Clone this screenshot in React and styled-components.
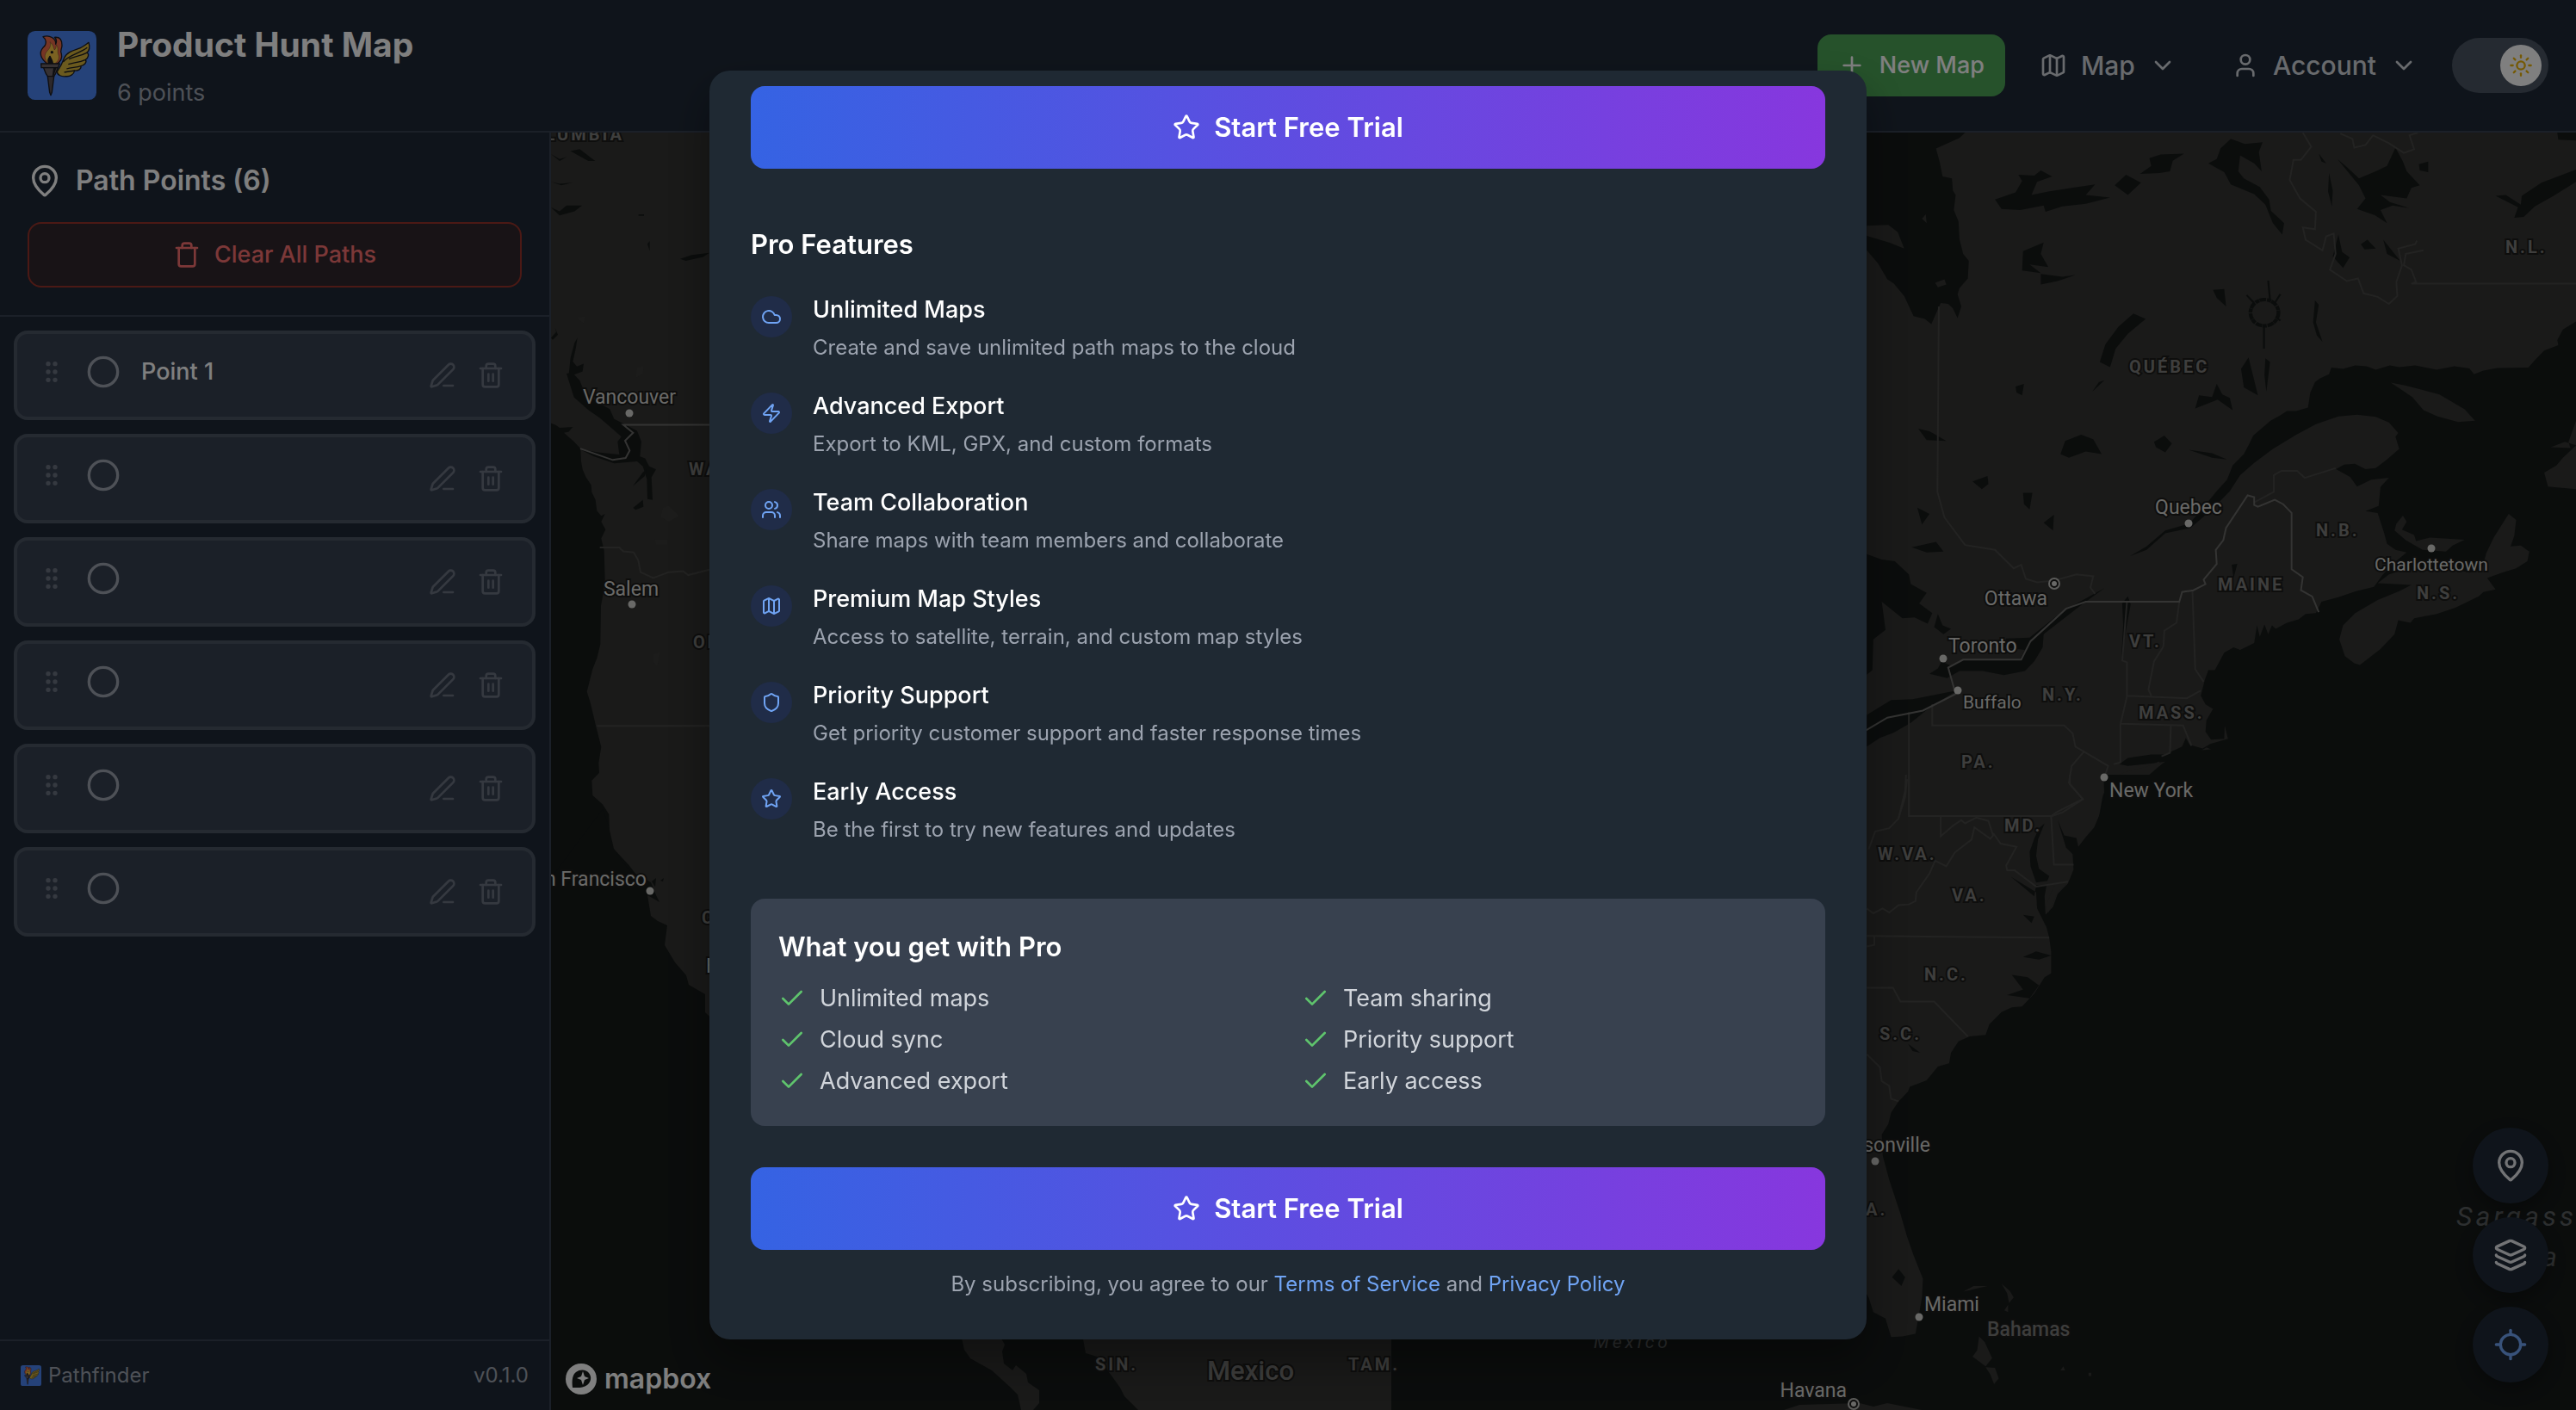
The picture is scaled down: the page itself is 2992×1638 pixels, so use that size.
import React from 'react';
import styled, { createGlobalStyle, css } from 'styled-components';
import {
	Check,
	ChevronDown,
	Circle,
	Cloud,
	GripVertical,
	Layers,
	Locate,
	Map,
	MapPin,
	PenLine,
	Plus,
	Shield,
	Star,
	Sun,
	Trash,
	Trash2,
	User,
	Users,
	Zap
} from 'lucide-react';

const colors = {
	panel: '#1f2937',
	modal: '#1f2933',
	raised: '#374151',
	line: '#374151',
	lineStrong: '#4b5563',
	text: '#ffffff',
	textSoft: '#d1d5db',
	textMuted: '#9ca3af',
	textFaint: '#6b7280',
	link: '#70a4f4',
	green: '#4ca556',
	check: '#5fc46d',
	red: '#f87171',
	land: '#343432',
	water: '#161a19',
	park: '#393937',
	border: '#464644',
	country: '#686866',
	halo: '#1c1c1b'
};

const size = {
	small: '24px',
	body: '27px',
	nav: '30px',
	heading: '31px',
	section: '32px',
	title: '39px'
};

const GlobalStyle = createGlobalStyle`
	* {
		box-sizing: border-box;
	}
	html, body, #root {
		height: 100%;
	}
	body {
		margin: 0;
		overflow: hidden;
		background: ${colors.water};
		color: ${colors.text};
		font-family: Inter, "Liberation Sans", sans-serif;
		font-size: ${size.body};
		line-height: 40px;
	}
	h1, h2, h3, h4, p, ul {
		margin: 0;
		padding: 0;
	}
	ul {
		list-style: none;
	}
	button {
		margin: 0;
		padding: 0;
		border: 0;
		background: none;
		color: inherit;
		font: inherit;
		cursor: pointer;
	}
	svg {
		display: block;
		flex-shrink: 0;
	}
`;

const Page = styled.div`
	display: flex;
	flex-direction: column;
	height: 100vh;
`;

const Header = styled.header`
	display: flex;
	align-items: center;
	justify-content: space-between;
	padding: 24px 32px;
	background: ${colors.panel};
	border-bottom: 2px solid ${colors.line};
`;

const Brand = styled.div`
	display: flex;
	align-items: center;
	gap: 24px;
`;

const BrandText = styled.div`
	display: flex;
	flex-direction: column;
	gap: 8px;
`;

const MapTitle = styled.h1`
	font-size: ${size.title};
	line-height: 56px;
	font-weight: 700;
`;

const PointCount = styled.p`
	color: ${colors.textMuted};
`;

const Nav = styled.nav`
	display: flex;
	align-items: center;
	gap: 16px;
`;

const NewMapButton = styled.button`
	display: flex;
	align-items: center;
	gap: 16px;
	height: 72px;
	padding: 0 24px;
	border-radius: 16px;
	background: ${colors.green};
	font-weight: 500;
`;

const NavButton = styled.button`
	display: flex;
	align-items: center;
	gap: 16px;
	height: 80px;
	padding: 0 24px;
	color: ${colors.textSoft};
	font-size: ${size.nav};
	font-weight: 500;
`;

const ThemeSwitch = styled.label`
	display: flex;
	align-items: center;
	justify-content: flex-end;
	width: 112px;
	height: 64px;
	padding: 8px;
	border-radius: 32px;
	background: ${colors.lineStrong};
`;

const SwitchInput = styled.input`
	width: 0;
	height: 0;
	margin: 0;
	appearance: none;
`;

const SwitchKnob = styled.span`
	display: flex;
	align-items: center;
	justify-content: center;
	width: 48px;
	height: 48px;
	border-radius: 50%;
	background: #ffffff;
	color: #eab308;
`;

const Body = styled.div`
	display: flex;
	flex: 1;
	min-height: 0;
`;

const Sidebar = styled.aside`
	display: flex;
	flex-direction: column;
	flex: 0 0 640px;
	background: ${colors.panel};
	border-right: 2px solid ${colors.line};
`;

const SidebarTop = styled.div`
	display: flex;
	flex-direction: column;
	gap: 24px;
	padding: 32px;
	border-bottom: 2px solid ${colors.line};
`;

const SidebarTitle = styled.h2`
	display: flex;
	align-items: center;
	gap: 16px;
	font-size: ${size.section};
	line-height: 48px;
	font-weight: 600;
`;

const ClearButton = styled.button`
	display: flex;
	align-items: center;
	justify-content: center;
	gap: 16px;
	height: 76px;
	border: 2px solid #96332a;
	border-radius: 16px;
	background: #30272d;
	color: ${colors.red};
	font-weight: 500;
`;

const PointList = styled.ul`
	display: flex;
	flex: 1;
	flex-direction: column;
	gap: 16px;
	padding: 16px;
`;

const PointRow = styled.li`
	display: flex;
	align-items: flex-start;
	gap: 24px;
	padding: 24px;
	border: 4px solid ${colors.lineStrong};
	border-radius: 16px;
	background: ${colors.raised};
`;

const Grip = styled.span`
	display: flex;
	align-items: center;
	height: 40px;
	color: ${colors.textFaint};
`;

const PointMarker = styled.button`
	color: ${colors.textMuted};
`;

const PointName = styled.span`
	flex: 1;
	font-weight: 500;
`;

const PointActions = styled.span`
	display: flex;
	gap: 8px;
`;

const IconButton = styled.button`
	padding: 8px;
	color: ${colors.textFaint};
`;

const SidebarFooter = styled.footer`
	display: flex;
	align-items: center;
	justify-content: space-between;
	padding: 24px;
	border-top: 2px solid ${colors.line};
	color: ${colors.textMuted};
	font-size: ${size.small};
	line-height: 32px;
`;

const AppName = styled.span`
	display: flex;
	align-items: center;
	gap: 8px;
`;

const MapArea = styled.main`
	position: relative;
	flex: 1;
	min-width: 0;
	overflow: hidden;
	background: ${colors.water};
`;

const MapDrawing = styled.svg`
	width: 100%;
	height: 100%;

	.edge path {
		fill: none;
		stroke: ${colors.border};
		stroke-width: 2;
		vector-effect: non-scaling-stroke;
	}
	.country path {
		fill: none;
		stroke: ${colors.country};
		stroke-width: 2;
		vector-effect: non-scaling-stroke;
	}
`;

const MapLabel = styled.text`
	font-family: Roboto, "Liberation Sans", sans-serif;
	font-size: ${props => props.$small ? '21px' : '23px'};
	fill: #d2d2cf;
	stroke: ${colors.halo};
	stroke-width: 4px;
	paint-order: stroke;
	${props => props.$kind === 'region' && css`
		font-size: 20px;
		font-weight: 700;
		letter-spacing: 3px;
		fill: #7c7c7a;
	`}
	${props => props.$kind === 'country' && css`
		font-size: ${props.$large ? '31px' : '23px'};
		font-weight: 500;
		fill: #7a7a78;
	`}
	${props => props.$kind === 'water' && css`
		font-size: ${props.$large ? '32px' : '21px'};
		font-style: italic;
		letter-spacing: 4px;
		fill: #5a5e60;
		stroke: none;
	`}
`;

const MapboxMark = styled.a`
	position: absolute;
	left: 16px;
	bottom: 16px;
	display: flex;
	align-items: center;
	gap: 8px;
	color: #ffffff;
	font-size: ${size.section};
	font-weight: 600;
	text-decoration: none;
`;

const FloatingControls = styled.div`
	position: absolute;
	right: 32px;
	bottom: 32px;
	display: flex;
	flex-direction: column;
	gap: 16px;
`;

const FloatingButton = styled.button`
	display: flex;
	align-items: center;
	justify-content: center;
	width: 88px;
	height: 88px;
	border-radius: 50%;
	background: ${colors.panel};
	color: ${props => props.$active ? colors.link : '#e5e7eb'};
	box-shadow: 0 8px 20px rgba(0, 0, 0, 0.3);
`;

const Backdrop = styled.div`
	position: fixed;
	inset: 0;
	display: flex;
	align-items: center;
	justify-content: center;
	background: rgba(0, 0, 0, 0.5);
`;

const Dialog = styled.section`
	display: flex;
	flex-direction: column;
	justify-content: flex-end;
	width: 100%;
	max-width: 1344px;
	height: 90vh;
	padding: 0 48px 48px;
	overflow: hidden;
	border-radius: 24px;
	background: ${colors.modal};
	box-shadow: 0 24px 50px rgba(0, 0, 0, 0.35);
`;

const TrialButton = styled.button`
	display: flex;
	flex-shrink: 0;
	align-items: center;
	justify-content: center;
	gap: 16px;
	height: 96px;
	border-radius: 16px;
	background: linear-gradient(to right, #3563e3, #8737de);
	font-size: ${size.heading};
	line-height: 48px;
	font-weight: 600;
`;

const Features = styled.div`
	display: flex;
	flex-direction: column;
	gap: 32px;
	padding: 64px 0;
`;

const DialogHeading = styled.h3`
	font-size: ${size.heading};
	line-height: 48px;
	font-weight: 600;
`;

const FeatureList = styled.ul`
	display: flex;
	flex-direction: column;
	gap: 32px;
`;

const Feature = styled.li`
	display: flex;
	align-items: flex-start;
	gap: 24px;
`;

const FeatureIcon = styled.span`
	display: flex;
	align-items: center;
	justify-content: center;
	width: 48px;
	height: 48px;
	margin-top: 4px;
	border-radius: 50%;
	background: #202c48;
	color: ${colors.link};
`;

const FeatureText = styled.div`
	display: flex;
	flex-direction: column;
	gap: 8px;
`;

const FeatureTitle = styled.h4`
	font-size: ${size.body};
	font-weight: 500;
`;

const FeatureNote = styled.p`
	color: ${colors.textMuted};
	font-size: ${size.small};
	line-height: 32px;
`;

const Summary = styled.div`
	display: flex;
	flex-direction: column;
	gap: 16px;
	margin-bottom: 48px;
	padding: 32px;
	border-radius: 16px;
	background: #38414f;
`;

const Perks = styled.ul`
	display: grid;
	grid-template-columns: 1fr 1fr;
	gap: 8px 32px;
`;

const Perk = styled.li`
	display: flex;
	align-items: center;
	gap: 16px;
	color: ${colors.textSoft};

	svg {
		color: ${colors.check};
	}
`;

const Legal = styled.p`
	margin-top: 24px;
	color: ${colors.textMuted};
	font-size: ${size.small};
	line-height: 32px;
	text-align: center;
`;

const LegalLink = styled.a`
	color: ${colors.link};
	text-decoration: none;
`;

const points = ['Point 1', '', '', '', '', ''];

const features = [
	{ icon: Cloud, title: 'Unlimited Maps', note: 'Create and save unlimited path maps to the cloud' },
	{ icon: Zap, title: 'Advanced Export', note: 'Export to KML, GPX, and custom formats' },
	{ icon: Users, title: 'Team Collaboration', note: 'Share maps with team members and collaborate' },
	{ icon: Map, title: 'Premium Map Styles', note: 'Access to satellite, terrain, and custom map styles' },
	{ icon: Shield, title: 'Priority Support', note: 'Get priority customer support and faster response times' },
	{ icon: Star, title: 'Early Access', note: 'Be the first to try new features and updates' }
];

const perks = [
	'Unlimited maps',
	'Team sharing',
	'Cloud sync',
	'Priority support',
	'Advanced export',
	'Early access'
];

const cities = [
	{ name: 'Vancouver', x: 731, y: 469, anchor: 'middle', dot: [731, 480] },
	{ name: 'Salem', x: 733, y: 692, anchor: 'middle', dot: [734, 702] },
	{ name: 'San Francisco', x: 751, y: 1029, anchor: 'end', dot: [755, 1035] },
	{ name: 'Bakersfield', x: 820, y: 1130, anchor: 'start' },
	{ name: 'Quebec', x: 2542, y: 597, anchor: 'middle', dot: [2542, 608] },
	{ name: 'Charlottetown', x: 2824, y: 663, anchor: 'middle', dot: [2824, 637], small: true },
	{ name: 'Ottawa', x: 2378, y: 703, anchor: 'end', dot: [2386, 678], capital: true },
	{ name: 'Toronto', x: 2263, y: 758, anchor: 'start', dot: [2257, 765] },
	{ name: 'Buffalo', x: 2280, y: 823, anchor: 'start', dot: [2274, 802], small: true },
	{ name: 'New York', x: 2450, y: 926, anchor: 'start', dot: [2444, 903] },
	{ name: 'Jacksonville', x: 2242, y: 1338, anchor: 'end', dot: [2178, 1349] },
	{ name: 'Miami', x: 2235, y: 1523, anchor: 'start', dot: [2229, 1530] },
	{ name: 'Havana', x: 2145, y: 1623, anchor: 'end', dot: [2153, 1631], capital: true }
];

const regions = [
	['WASH.', 800, 552],
	['ORE.', 805, 753],
	['CALIF.', 815, 1073],
	['N.L.', 2910, 294],
	['QUÉBEC', 2473, 433],
	['N.B.', 2690, 623],
	['MAINE', 2576, 686],
	['N.S.', 2807, 696],
	['VT.', 2473, 752],
	['N.Y.', 2372, 814],
	['MASS.', 2484, 835],
	['PA.', 2278, 892],
	['MD.', 2328, 966],
	['W.VA.', 2181, 999],
	['VA.', 2267, 1047],
	['N.C.', 2235, 1139],
	['S.C.', 2183, 1208],
	['FLA.', 2139, 1412],
	['SIN.', 1272, 1592],
	['TAM.', 1566, 1592]
];

const Torch = ({ px }) => (
	<svg width={px} height={px} viewBox="24 24 240 240" aria-hidden="true">
		<rect x="24" y="24" width="240" height="240" rx="26" fill="#4b84f2"/>
		<g stroke="#1c1c22" strokeWidth="4" strokeLinejoin="round">
			<path d="M127 166C138 150 144 140 152 118C160 98 182 92 200 86C216 81 226 72 237 64C242 80 240 92 230 100C240 102 236 118 226 124C232 132 222 144 210 146C212 156 200 164 188 162C186 174 172 184 158 182C142 184 128 178 127 166Z" fill="#d6b53c"/>
			<path d="M230 100C208 112 186 112 168 122M226 124C204 134 186 134 166 140M210 146C192 152 176 150 160 156M188 162C174 166 164 164 152 168" fill="none"/>
			<path d="M148 132C166 108 206 102 232 82" fill="none"/>
			<path d="M92 138C70 120 62 100 78 82C94 68 88 52 78 44C100 36 124 50 122 70C126 62 124 52 118 46C138 44 144 56 144 74C144 86 136 92 142 104C146 120 138 132 124 140Z" fill="#ec6a48"/>
			<path d="M98 138C82 124 80 106 94 92C104 82 106 72 102 62C116 74 114 84 118 90C124 84 124 76 124 72C134 84 126 96 132 108C136 122 128 132 118 138Z" fill="#f6c544" strokeWidth="1"/>
			<path d="M100 138C90 126 98 118 102 112C106 122 112 126 112 138Z" fill="#1c1c22"/>
			<circle cx="109" cy="98" r="3" fill="#1c1c22"/>
			<path d="M71 138H136L130 152C126 160 124 172 116 182H94C86 172 84 162 80 152H72Z" fill="#6c6266"/>
			<path d="M80 152H130" fill="none"/>
			<path d="M94 182H116L109 238L105 248L101 238Z" fill="#5a5055"/>
			<path d="M116 154L122 154L112 182Z" fill="#2a282e"/>
		</g>
	</svg>
);

const MapboxIcon = () => (
	<svg width="38" height="38" viewBox="0 0 38 38" aria-hidden="true">
		<circle cx="19" cy="19" r="18" fill="currentColor"/>
		<path d="M9 29C8 20 9 14 13 11C18 7 25 8 28 12C32 17 30 23 26 26C21 30 14 29 9 29Z" fill={colors.water}/>
		<path d="M21 10L23 16L28 18L23 20L21 26L19 20L14 18L19 16Z" fill="currentColor"/>
	</svg>
);

const WestCoast = () => (
	<g>
		<g transform="translate(630 140) scale(0.3333 0.574)" fill={colors.water}>
			<path d="M0 606L45 616L60 622L106 620L92 630L75 632L110 650L133 664L135 690L140 706L152 722L170 738L172 752L185 768L190 790L205 800L218 796L205 812L220 828L205 846L215 870L218 930L210 964L204 982L202 1060L190 1088L175 1110L155 1156L168 1180L185 1222L205 1268L196 1300L198 1320L172 1336L175 1366L210 1384L232 1404L234 1440L242 1470L300 1506L372 1560L0 1568Z"/>
			<path d="M84 512L104 510L130 526L145 548L190 570L235 584L250 604L290 616L330 628L345 650L340 680L358 684L372 700L396 706L380 722L384 768L366 766L364 726L350 700L330 690L250 694L180 680L133 666L200 672L268 676L262 650L275 640L240 622L200 602L160 586L110 560Z"/>
			<path d="M92 514L98 480L112 450L122 440L116 462L106 488L120 498L144 492L140 508L112 514Z"/>
			<path d="M30 68L60 78L84 74L60 82ZM98 62L130 58L184 82L160 82ZM30 124L60 128L104 126L66 131ZM30 176L60 184L84 172L138 172L112 184L60 192ZM480 280L520 272L582 268L560 276L500 284ZM366 250L374 244V264ZM335 190H354V193H335ZM315 740L350 712L364 706L356 720ZM316 784L350 768L352 782L325 788ZM30 440L48 428L44 420L54 434L36 444Z"/>
		</g>
		<g transform="translate(630 140) scale(0.3333 0.574)" fill={colors.park}>
			<path d="M420 784L440 780L476 800L440 812L412 802ZM392 848L436 848V858L396 858ZM120 400L150 396L144 410ZM386 1080L410 1076L400 1104L386 1096ZM330 500L352 498L350 512L326 520Z"/>
		</g>
		<path d="M640 1020L700 940L707 960L713 986L722 1000L732 1012L756 1025L762 1040L766 1048L752 1040L756 1064L764 1070L775 1075L772 1098L784 1118L797 1133L800 1144L819 1155V1176L840 1196V1638H640Z" fill={colors.water}/>
		<path d="M757 1024L762 1020L761 1030ZM767 1023L771 1020L770 1024Z" fill={colors.water}/>
		<g className="edge" transform="translate(630 140) scale(0.3333 0.574)">
			<path d="M200 864L268 864L282 872L318 874L334 890L342 914L386 926L440 914L490 912L508 920L582 909M190 1225H582"/>
		</g>
		<g className="country" transform="translate(630 140) scale(0.3333 0.574)">
			<path d="M132 664L245 687L290 683L304 668L288 648L316 632L282 616H582"/>
		</g>
	</g>
);

const EastNorth = () => (
	<g transform="translate(2140 150) scale(0.5434 0.5102)">
		<g fill={colors.water}>
			<path d="M0 0H270L250 20L200 44L208 76L214 108L234 112L236 140L242 150L238 184L248 210L250 250L258 284L270 300L268 340L250 362L246 376L254 404L246 430L236 408L226 398L210 396L204 410L190 444L176 432L152 426L132 380L110 352L96 342L76 306L52 276L0 250Z"/>
			<path d="M1568 438L1540 456L1528 480L1530 492L1500 504L1482 524L1466 543L1400 544L1370 550L1350 558L1340 545L1308 540L1270 548L1224 538L1190 542L1170 538L1140 548L1120 540L1096 538L1070 546L1045 543L1040 558L1020 568L1010 576L1000 600L995 634L970 642L950 642L935 652L915 664L878 698L868 720L858 740L834 766L822 798L800 824L780 850L742 898L690 914L650 950L615 972L650 958L690 920L744 908L790 866L828 824L850 788L880 760L920 728L970 696L1012 672L1060 654L1100 650L1140 655L1168 668L1188 692L1182 700L1190 728L1164 752L1140 772L1118 774L1095 762L1072 764L1055 774L1085 792L1100 814L1130 798L1168 794L1150 815L1146 858L1118 870L1144 874L1158 920L1164 944L1182 958L1206 964L1176 990L1154 1016L1136 1042L1098 1052L1060 1066L1024 1076L1012 1102L990 1104L975 1116L950 1124L926 1138L918 1130L910 1150L902 1128L892 1156L886 1130L880 1170L850 1186L836 1180L816 1192L796 1232L782 1232L774 1256L766 1290L776 1310L792 1320L778 1346L776 1372L788 1390L816 1388L817 1358L824 1388L786 1400L770 1410L742 1402L734 1386L726 1406L690 1424L660 1424L610 1432L592 1446L610 1450L664 1444L690 1440L670 1456L600 1484L566 1492L556 1520L548 1568H1568Z"/>
			<path d="M186 1240L204 1228L212 1212L232 1222L262 1208L380 1206L390 1186L340 1180L350 1160L400 1158L470 1098L560 1045L510 1084L430 1150L428 1180L410 1212L390 1234L345 1243L300 1234L250 1234L224 1250Z"/>
			<path d="M52 1334L104 1300L150 1298L246 1278L190 1314L146 1352L110 1374L80 1386L52 1406Z"/>
			<path d="M52 968L84 980L112 984L142 1014L146 1036L180 1056L164 1080L192 1102L182 1126L154 1112L128 1114L84 1076L92 1140L66 1162L64 1232L52 1242ZM204 1104L214 1130L232 1138L216 1150L196 1134Z"/>
			<path d="M326 160L370 144L384 118L376 104L410 106L424 94L448 108L416 120L404 150L440 142L490 134L540 126L520 150L572 156L520 170L470 176L434 188L430 174L380 184L340 182ZM582 128L606 104L638 122L610 150ZM636 102L660 84L656 66L680 58L730 56L706 72L700 96L678 100Z"/>
			<path d="M782 78L800 68L808 44L830 22L860 34L898 30L890 52L896 96L880 78L850 60L846 96L858 112L892 132L912 160L916 186L944 214L940 240L920 214L904 172L880 148L830 126L816 98Z"/>
			<path d="M1058 68L1080 88L1104 112L1140 96L1164 84L1182 42L1198 74L1206 96L1234 128L1216 134L1206 158L1150 150L1170 166L1212 180L1176 174L1150 184L1164 214L1138 196L1100 182L1118 158L1104 128ZM1040 100L1048 140L1046 176L1038 142ZM1018 56L1034 78L1024 74ZM1232 80L1252 74V98L1234 94Z"/>
			<path d="M1396 152L1418 150L1450 172L1452 152L1494 122L1568 92V120L1520 152L1480 176L1456 200L1436 202L1444 178ZM1060 240L1068 280L1084 292L1070 316L1048 290ZM1108 262L1122 252L1140 272L1116 274ZM1156 252L1192 300L1164 284ZM1528 8H1568V26L1530 24Z"/>
			<path d="M386 278L430 258L424 284L440 314L400 308L424 328L384 322ZM424 330L470 336L498 332L460 346L424 354ZM550 530L562 490L590 450L622 420L648 432L610 466L584 500L572 542ZM534 598L548 576L560 572ZM370 586L388 580L384 606L372 600ZM792 366L816 364L820 404L800 384ZM754 636L762 606L790 610L800 580L812 604L828 612L834 640L802 616ZM852 546L868 520L874 546L888 606L858 588ZM904 522L914 530L906 598L902 560Z"/>
			<path d="M162 682L186 688L222 710L180 708ZM466 740L476 710L510 696L536 706L554 740L520 734L484 748ZM666 712L688 698L704 716L690 736L670 724ZM740 730L790 738L822 752L790 748ZM278 802L310 790L312 808L298 820ZM386 828L406 828L400 866L388 854ZM160 862L186 876L170 900ZM430 896L452 878L450 914ZM148 952L200 940L216 962L180 964ZM610 1064L616 1082L606 1140L596 1208L600 1130L598 1080ZM832 992L844 990L836 1022Z"/>
			<path d="M1010 390L1018 400L1012 440L1026 484L1014 470L1006 440Z"/>
		</g>
		<ellipse cx="902" cy="418" rx="30" ry="30" fill="none" stroke={colors.water} strokeWidth="8" strokeDasharray="14 2 9 1"/>
		<path d="M910 345L914 390M864 378L880 396M936 376L924 396M901 448V500M936 436L926 428" fill="none" stroke={colors.water} strokeWidth="4"/>
		<g fill={colors.land}>
			<path d="M52 220L98 218L118 234L132 272L100 258L52 243ZM170 204L178 194L180 214ZM198 350L218 342L222 354L204 360Z"/>
			<path d="M1172 577L1205 584L1240 594L1276 604L1330 638L1352 664L1316 667L1272 654L1242 640L1218 610Z"/>
			<path d="M1180 914L1184 898L1198 880L1206 894L1196 912L1222 924L1226 938L1256 930L1330 935L1304 948L1290 962L1240 958L1204 936Z"/>
			<path d="M1144 1034L1168 1014L1200 1004L1250 1006L1300 1000L1340 1010L1366 1004L1376 966L1392 930L1424 876L1440 890L1436 926L1428 950L1450 948L1468 962L1464 984L1440 1000L1410 1010L1378 1022L1396 1048L1370 1054L1360 1064L1310 1090L1270 1104L1222 1114L1214 1124L1188 1118L1180 1150L1150 1184L1106 1220L1094 1216L1074 1200L1062 1162L1070 1130L1096 1102L1144 1072L1190 1052L1216 1038Z"/>
			<path d="M1568 664L1552 712L1556 726L1514 724L1544 712L1568 720L1540 748L1526 766L1500 782L1508 814L1568 820Z"/>
			<path d="M572 1478L610 1462L650 1452L676 1440L682 1446L656 1470L600 1482ZM768 1414L778 1408L788 1412Z"/>
		</g>
		<g className="edge">
			<path d="M206 404L203 826L218 884L262 947L326 958L366 1000L382 992L392 1024L416 1032L452 1028L500 1014L536 1018L530 1044L540 1058"/>
			<path d="M984 8L1002 40L980 70L964 70L956 116L978 158L1012 188L1010 228L984 224L990 252L1026 276L1034 244L1050 238L1054 284L1042 320L1078 346L1102 340L1114 374L1144 382L1168 398L1186 380L1184 348L1196 310L1188 272L1224 262L1228 254M1242 276L1204 284L1200 310L1216 320L1226 348L1216 352H1568M1064 10L1090 22L1094 42L1118 36L1134 14L1168 32L1200 54L1222 46L1212 14L1230 8"/>
			<path d="M608 1078L604 1130L598 1210L608 1214V1292L594 1356V1442L580 1446M608 1290L736 1296L766 1278M596 1354L728 1358L746 1404M702 1358L700 1420L682 1428M720 1076L714 1124L688 1142L686 1178L666 1212L654 1276L660 1290M748 1050L754 1230L772 1258M192 1310V1358H474L492 1376L498 1406L568 1450L560 1476M142 1328V1564H448L470 1556L514 1526L484 1488L490 1450L516 1418M138 1480L134 1520L120 1568M880 850L922 826V788L938 778L972 778L988 794L1054 772"/>
		</g>
		<g className="country">
			<path d="M0 1395L52 1368L96 1340L172 1324L242 1286L226 1226L258 1208H382L402 1166L478 1092L520 1076H720L726 1054L750 1050L776 1036L772 1026L800 990L798 958L814 936L820 908L866 834L880 838V856L888 860L924 844L942 854L960 874V1002L984 1020L980 1050L1004 1064L1018 1100"/>
		</g>
	</g>
);

const EastSouth = () => (
	<g transform="translate(2140 900) scale(0.5434 0.4707)">
		<g fill={colors.water}>
			<path d="M558 0L560 60L552 92L538 130L520 154L504 178L500 156L474 150L460 112L470 150L478 180L492 196L494 234L482 268L460 294L450 326L434 346L432 300L436 274L414 272L410 300L360 252L414 290L416 330L436 376L442 402L446 436L446 490L432 500L410 540L384 572L362 574L340 586L314 616L306 642L272 646L248 658L232 686L228 712L204 720L180 754L144 770L140 782L120 806L104 834L98 862L84 888L86 940L100 1000L124 1084L138 1140L152 1186L172 1244L170 1290L156 1380L128 1386L104 1388L92 1342L66 1326L56 1290L40 1260H-1000V1568H1568V0Z"/>
			<path d="M432 120L420 132L410 158L400 190L402 226L414 266L438 262L442 250L420 232L414 200L418 160ZM386 450L414 436L446 446L420 456ZM362 494L396 500L420 520L400 552L352 544L386 530ZM106 1240L120 1220L134 1240L126 1262ZM386 346L410 350L404 366ZM140 664L166 686L150 682Z"/>
		</g>
		<g fill={colors.land}>
			<path d="M482 268L460 290L440 340L434 330L446 290L456 268Z"/>
			<path d="M258 1276L280 1262L310 1262L280 1270ZM340 1256L358 1274L366 1290L356 1304L352 1280ZM346 1322L354 1308V1326ZM292 1386L304 1400L320 1440L306 1460L278 1436L288 1420ZM306 1462L326 1464L334 1490L324 1504L316 1480ZM466 1470L472 1460L476 1470ZM526 1476H532V1484H526Z"/>
		</g>
		<g className="edge">
			<path d="M142 0V102H446L458 92L514 60L486 24V0M446 102L452 222H494M136 0L134 40L120 108L100 132L70 140L56 184M210 102V152L236 126L254 112L262 120L286 106L312 114L322 150L316 158L282 130L276 160L240 192L222 226L198 212L186 244L158 290L156 312L142 320L120 322L100 340L86 330L66 342L52 330M322 144L338 170L372 178L350 224L352 236L368 236L414 276L482 264M52 398L442 402M68 398V420L52 424M52 526H108L124 560H196L268 646M52 690L80 722L84 756L100 768L104 800L120 806"/>
		</g>
	</g>
);

const BasemapDrawing = () => (
	<MapDrawing viewBox="640 154 2352 1484" preserveAspectRatio="xMinYMin slice" role="img" aria-label="Map">
		<rect x="640" y="154" width="2352" height="1484" fill={colors.land}/>
		<WestCoast/>
		<EastNorth/>
		<EastSouth/>
		<rect x="820" y="1490" width="1320" height="148" fill={colors.water}/>
		<path d="M1116 1550L1120 1568L1127 1578L1152 1592L1174 1612L1182 1620L1186 1638H1200L1207 1630V1615L1194 1606L1192 1596L1180 1586L1176 1592L1166 1584L1164 1570L1167 1562L1160 1550ZM1257 1550L1261 1572L1278 1577L1288 1594L1301 1612L1306 1622L1322 1638H1616V1550Z" fill={colors.land}/>
		<path d="M2072 1638L2090 1632L2160 1630L2176 1634L2192 1630L2232 1638Z" fill={colors.land}/>
		<MapLabel $kind="region" x={725} y={163} textAnchor="end">COLUMBIA</MapLabel>
		{regions.map(([name, x, y]) => <MapLabel key={name} $kind="region" x={x} y={y}>{name}</MapLabel>)}
		{cities.map(city => (
			<g key={city.name}>
				<MapLabel $small={city.small} x={city.x} y={city.y} textAnchor={city.anchor}>{city.name}</MapLabel>
				{city.dot && !city.capital ? <circle cx={city.dot[0]} cy={city.dot[1]} r="4.5" fill="#d2d2cf"/> : null}
				{city.capital ? (
					<g>
						<circle cx={city.dot[0]} cy={city.dot[1]} r="6" fill={colors.halo} stroke="#b8b8b5" strokeWidth="2"/>
						<circle cx={city.dot[0]} cy={city.dot[1]} r="3" fill="#d2d2cf"/>
					</g>
				) : null}
			</g>
		))}
		<MapLabel $kind="country" $large x={1402} y={1603}>Mexico</MapLabel>
		<MapLabel $kind="country" x={2308} y={1552}>Bahamas</MapLabel>
		<MapLabel $kind="water" x={1851} y={1566}>Mexico</MapLabel>
		<MapLabel $kind="water" $large x={2853} y={1424}>Sargasso</MapLabel>
		<MapLabel $kind="water" $large x={2910} y={1471}>Sea</MapLabel>
	</MapDrawing>
);

const TrialAction = () => (
	<TrialButton type="button">
		<Star size={32}/>
		Start Free Trial
	</TrialButton>
);

const PointItem = ({ name, index }) => (
	<PointRow>
		<Grip><GripVertical size={32}/></Grip>
		<PointMarker type="button" aria-label={`Select point ${index + 1}`}><Circle size={40}/></PointMarker>
		<PointName>{name}</PointName>
		<PointActions>
			<IconButton type="button" aria-label="Edit"><PenLine size={32}/></IconButton>
			<IconButton type="button" aria-label="Delete"><Trash2 size={32}/></IconButton>
		</PointActions>
	</PointRow>
);

const ProDialog = () => (
	<Backdrop>
		<Dialog role="dialog" aria-modal="true" aria-label="Pro">
			<TrialAction/>
			<Features>
				<DialogHeading>Pro Features</DialogHeading>
				<FeatureList>
					{features.map(({ icon: Icon, title, note }) => (
						<Feature key={title}>
							<FeatureIcon><Icon size={24}/></FeatureIcon>
							<FeatureText>
								<FeatureTitle>{title}</FeatureTitle>
								<FeatureNote>{note}</FeatureNote>
							</FeatureText>
						</Feature>
					))}
				</FeatureList>
			</Features>
			<Summary>
				<DialogHeading>What you get with Pro</DialogHeading>
				<Perks>
					{perks.map(perk => <Perk key={perk}><Check size={32}/>{perk}</Perk>)}
				</Perks>
			</Summary>
			<TrialAction/>
			<Legal>
				By subscribing, you agree to our <LegalLink href="#terms">Terms of Service</LegalLink> and <LegalLink href="#privacy">Privacy Policy</LegalLink>
			</Legal>
		</Dialog>
	</Backdrop>
);

const App = () => (
	<Page>
		<GlobalStyle/>
		<Header>
			<Brand>
				<Torch px={80}/>
				<BrandText>
					<MapTitle>Product Hunt Map</MapTitle>
					<PointCount>6 points</PointCount>
				</BrandText>
			</Brand>
			<Nav>
				<NewMapButton type="button"><Plus size={32}/>New Map</NewMapButton>
				<NavButton type="button"><Map size={32}/>Map<ChevronDown size={32}/></NavButton>
				<NavButton type="button"><User size={32}/>Account<ChevronDown size={32}/></NavButton>
				<ThemeSwitch>
					<SwitchInput type="checkbox" role="switch" aria-label="Dark theme" defaultChecked/>
					<SwitchKnob><Sun size={28}/></SwitchKnob>
				</ThemeSwitch>
			</Nav>
		</Header>
		<Body>
			<Sidebar>
				<SidebarTop>
					<SidebarTitle><MapPin size={40}/>Path Points ({points.length})</SidebarTitle>
					<ClearButton type="button"><Trash size={32}/>Clear All Paths</ClearButton>
				</SidebarTop>
				<PointList>
					{points.map((name, index) => <PointItem key={index} name={name} index={index}/>)}
				</PointList>
				<SidebarFooter>
					<AppName><Torch px={24}/>Pathfinder</AppName>
					<span>v0.1.0</span>
				</SidebarFooter>
			</Sidebar>
			<MapArea>
				<BasemapDrawing/>
				<MapboxMark href="#mapbox"><MapboxIcon/>mapbox</MapboxMark>
				<FloatingControls>
					<FloatingButton type="button" aria-label="Add point"><MapPin size={40}/></FloatingButton>
					<FloatingButton type="button" aria-label="Layers"><Layers size={40}/></FloatingButton>
					<FloatingButton type="button" aria-label="Locate me" $active><Locate size={40}/></FloatingButton>
				</FloatingControls>
			</MapArea>
		</Body>
		<ProDialog/>
	</Page>
);

export default App;
